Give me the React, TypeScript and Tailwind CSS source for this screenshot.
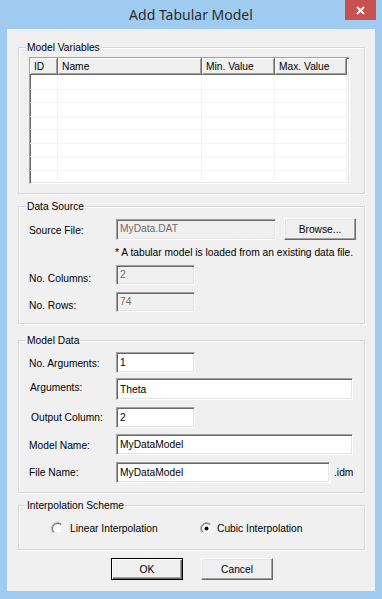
import React from "react";

const sunken =
  "border border-t-[#a0a0a0] border-l-[#a0a0a0] border-r-white border-b-white shadow-[inset_1px_1px_0_#696969,inset_-1px_-1px_0_#e3e3e3]";

function Group({
  title,
  className,
  children,
}: {
  title: string;
  className: string;
  children?: React.ReactNode;
}) {
  return (
    <div
      className={
        "ml-[11px] w-[347px] flex flex-col border border-[#d5d5d5] shadow-[inset_1px_1px_0_#ffffff,1px_1px_0_#ffffff] " +
        className
      }
    >
      <div className="-mt-[7px] ml-[7px] self-start h-[13px] px-[1px] bg-[#f0f0f0] whitespace-nowrap">
        {title}
      </div>
      {children}
    </div>
  );
}

function Edit({
  value,
  w,
  h,
  disabled,
}: {
  value: string;
  w: string;
  h: string;
  disabled?: boolean;
}) {
  return (
    <div
      className={
        sunken +
        " shrink-0 flex pl-[3px] whitespace-nowrap overflow-hidden " +
        w +
        " " +
        h +
        (disabled ? " bg-[#f0f0f0] text-[#6d6d6d] items-start pt-[2px]" : " bg-white text-black items-center")
      }
    >
      {value}
    </div>
  );
}

function Button({ label, w, def }: { label: string; w: string; def?: boolean }) {
  return (
    <div
      className={
        "shrink-0 h-[22px] flex items-center justify-center bg-[#f0f0f0] " +
        w +
        (def
          ? " border border-black shadow-[inset_1px_1px_0_#ffffff,inset_-1px_-1px_0_#696969,inset_-2px_-2px_0_#a0a0a0]"
          : " border border-t-white border-l-white border-r-[#696969] border-b-[#696969] shadow-[inset_-1px_-1px_0_#a0a0a0,inset_1px_1px_0_#e3e3e3]")
      }
    >
      {label}
    </div>
  );
}

function Radio({ checked }: { checked?: boolean }) {
  return (
    <svg width="13" height="13" viewBox="0 0 13 13" className="shrink-0">
      <circle cx="6.5" cy="6.5" r="5" fill="#ffffff" />
      <path d="M2.26 10.74 A6 6 0 0 1 10.74 2.26" fill="none" stroke="#a0a0a0" strokeWidth="1" />
      <path d="M10.74 2.26 A6 6 0 0 1 2.26 10.74" fill="none" stroke="#ffffff" strokeWidth="1" />
      <path d="M2.96 10.04 A5 5 0 0 1 10.04 2.96" fill="none" stroke="#696969" strokeWidth="1" />
      <path d="M10.04 2.96 A5 5 0 0 1 2.96 10.04" fill="none" stroke="#e3e3e3" strokeWidth="1" />
      {checked && <circle cx="6.5" cy="6.5" r="2" fill="#000000" />}
    </svg>
  );
}

const cols = [
  { name: "ID", w: "w-[28px]" },
  { name: "Name", w: "w-[144px]" },
  { name: "Min. Value", w: "w-[73px]" },
  { name: "Max. Value", w: "w-[72px]" },
];

const rowHeights = ["h-[15px]", "h-[13px]", "h-[14px]", "h-[13px]", "h-[14px]", "h-[13px]", "h-[14px]", "h-[13px]"];

export default function App() {
  return (
    <div className="w-[382px] h-[599px] bg-[#9fcbf1] flex flex-col font-['Liberation_Sans',Arial,sans-serif] text-[10.25px] leading-[13px] text-black">
      {/* Title bar */}
      <div className="relative h-[29px] shrink-0 flex items-center justify-center pt-[1px]">
        <span className="font-['Noto_Sans',sans-serif] text-[14px] leading-[18px] text-[#2b2b2b]">
          Add Tabular Model
        </span>
        <div className="absolute right-[6px] top-0 w-[31px] h-[20px] bg-[#c75050] flex items-center justify-center">
          <svg width="9" height="9" viewBox="0 0 9 9">
            <path d="M1 1 L8 8 M8 1 L1 8" stroke="#ffffff" strokeWidth="1.8" />
          </svg>
        </div>
      </div>

      {/* Client area */}
      <div className="ml-[7px] w-[368px] h-[562px] bg-[#f0f0f0] flex flex-col">
        {/* Model Variables */}
        <Group title="Model Variables" className="mt-[18px] h-[147px]">
          <div className={sunken + " mt-[3px] ml-[10px] w-[321px] h-[127px] bg-white flex flex-col overflow-hidden"}>
            <div className="flex h-[17px] shrink-0">
              {cols.map((c) => (
                <div
                  key={c.name}
                  className={
                    c.w +
                    " shrink-0 h-[17px] flex items-center pl-[4px] bg-[#f0f0f0] border-r border-b border-r-[#696969] border-b-[#696969] shadow-[inset_1px_1px_0_#ffffff,inset_-1px_-1px_0_#a0a0a0] whitespace-nowrap"
                  }
                >
                  {c.name}
                </div>
              ))}
            </div>
            {rowHeights.map((h, i) => (
              <div key={i} className={"flex shrink-0 border-b border-[#f3f3f3] " + h}>
                {cols.map((c) => (
                  <div key={c.name} className={c.w + " shrink-0 border-r border-[#f3f3f3]"} />
                ))}
              </div>
            ))}
          </div>
        </Group>

        {/* Data Source */}
        <Group title="Data Source" className="mt-[12px] h-[118px]">
          <div className="mt-[5px] ml-[10px] flex items-center h-[22px]">
            <div className="w-[87px] shrink-0 pt-[2px]">Source File:</div>
            <Edit value="MyData.DAT" w="w-[160px]" h="h-[21px]" disabled />
            <div className="ml-[8px]">
              <Button label="Browse..." w="w-[72px]" />
            </div>
          </div>
          <div className="mt-[6px] ml-[96px] whitespace-nowrap">
            * A tabular model is loaded from an existing data file.
          </div>
          <div className="mt-[6px] ml-[10px] flex items-start">
            <div className="w-[87px] shrink-0 pt-[7px]">No. Columns:</div>
            <Edit value="2" w="w-[79px]" h="h-[20px]" disabled />
          </div>
          <div className="mt-[7px] ml-[10px] flex items-start">
            <div className="w-[87px] shrink-0 pt-[7px]">No. Rows:</div>
            <Edit value="74" w="w-[79px]" h="h-[20px]" disabled />
          </div>
        </Group>

        {/* Model Data */}
        <Group title="Model Data" className="mt-[16px] h-[153px]">
          <div className="mt-[5px] ml-[10px] flex items-center h-[21px]">
            <div className="w-[87px] shrink-0 pt-[2px]">No. Arguments:</div>
            <Edit value="1" w="w-[79px]" h="h-[21px]" />
          </div>
          <div className="mt-[5px] ml-[11px] flex items-center h-[22px]">
            <div className="w-[86px] shrink-0 pb-[3px]">Arguments:</div>
            <Edit value="Theta" w="w-[237px]" h="h-[22px]" />
          </div>
          <div className="mt-[7px] ml-[12px] flex items-center h-[21px]">
            <div className="w-[85px] shrink-0">Output Column:</div>
            <Edit value="2" w="w-[79px]" h="h-[21px]" />
          </div>
          <div className="mt-[6px] ml-[10px] flex items-center h-[21px]">
            <div className="w-[87px] shrink-0 pt-[2px]">Model Name:</div>
            <Edit value="MyDataModel" w="w-[237px]" h="h-[21px]" />
          </div>
          <div className="mt-[7px] ml-[10px] flex items-center h-[21px]">
            <div className="w-[87px] shrink-0">File Name:</div>
            <Edit value="MyDataModel" w="w-[214px]" h="h-[21px]" />
            <div className="ml-[4px]">.idm</div>
          </div>
        </Group>

        {/* Interpolation Scheme */}
        <Group title="Interpolation Scheme" className="mt-[12px] h-[45px]">
          <div className="mt-[10px] ml-[32px] flex items-center h-[13px]">
            <div className="w-[149px] shrink-0 flex items-center">
              <Radio />
              <span className="ml-[6px] whitespace-nowrap">Linear Interpolation</span>
            </div>
            <div className="flex items-center">
              <Radio checked />
              <span className="ml-[4px] whitespace-nowrap">Cubic Interpolation</span>
            </div>
          </div>
        </Group>

        {/* Buttons */}
        <div className="mt-[8px] ml-[104px] flex gap-[18px]">
          <Button label="OK" w="w-[72px]" def />
          <Button label="Cancel" w="w-[72px]" />
        </div>
      </div>
    </div>
  );
}
